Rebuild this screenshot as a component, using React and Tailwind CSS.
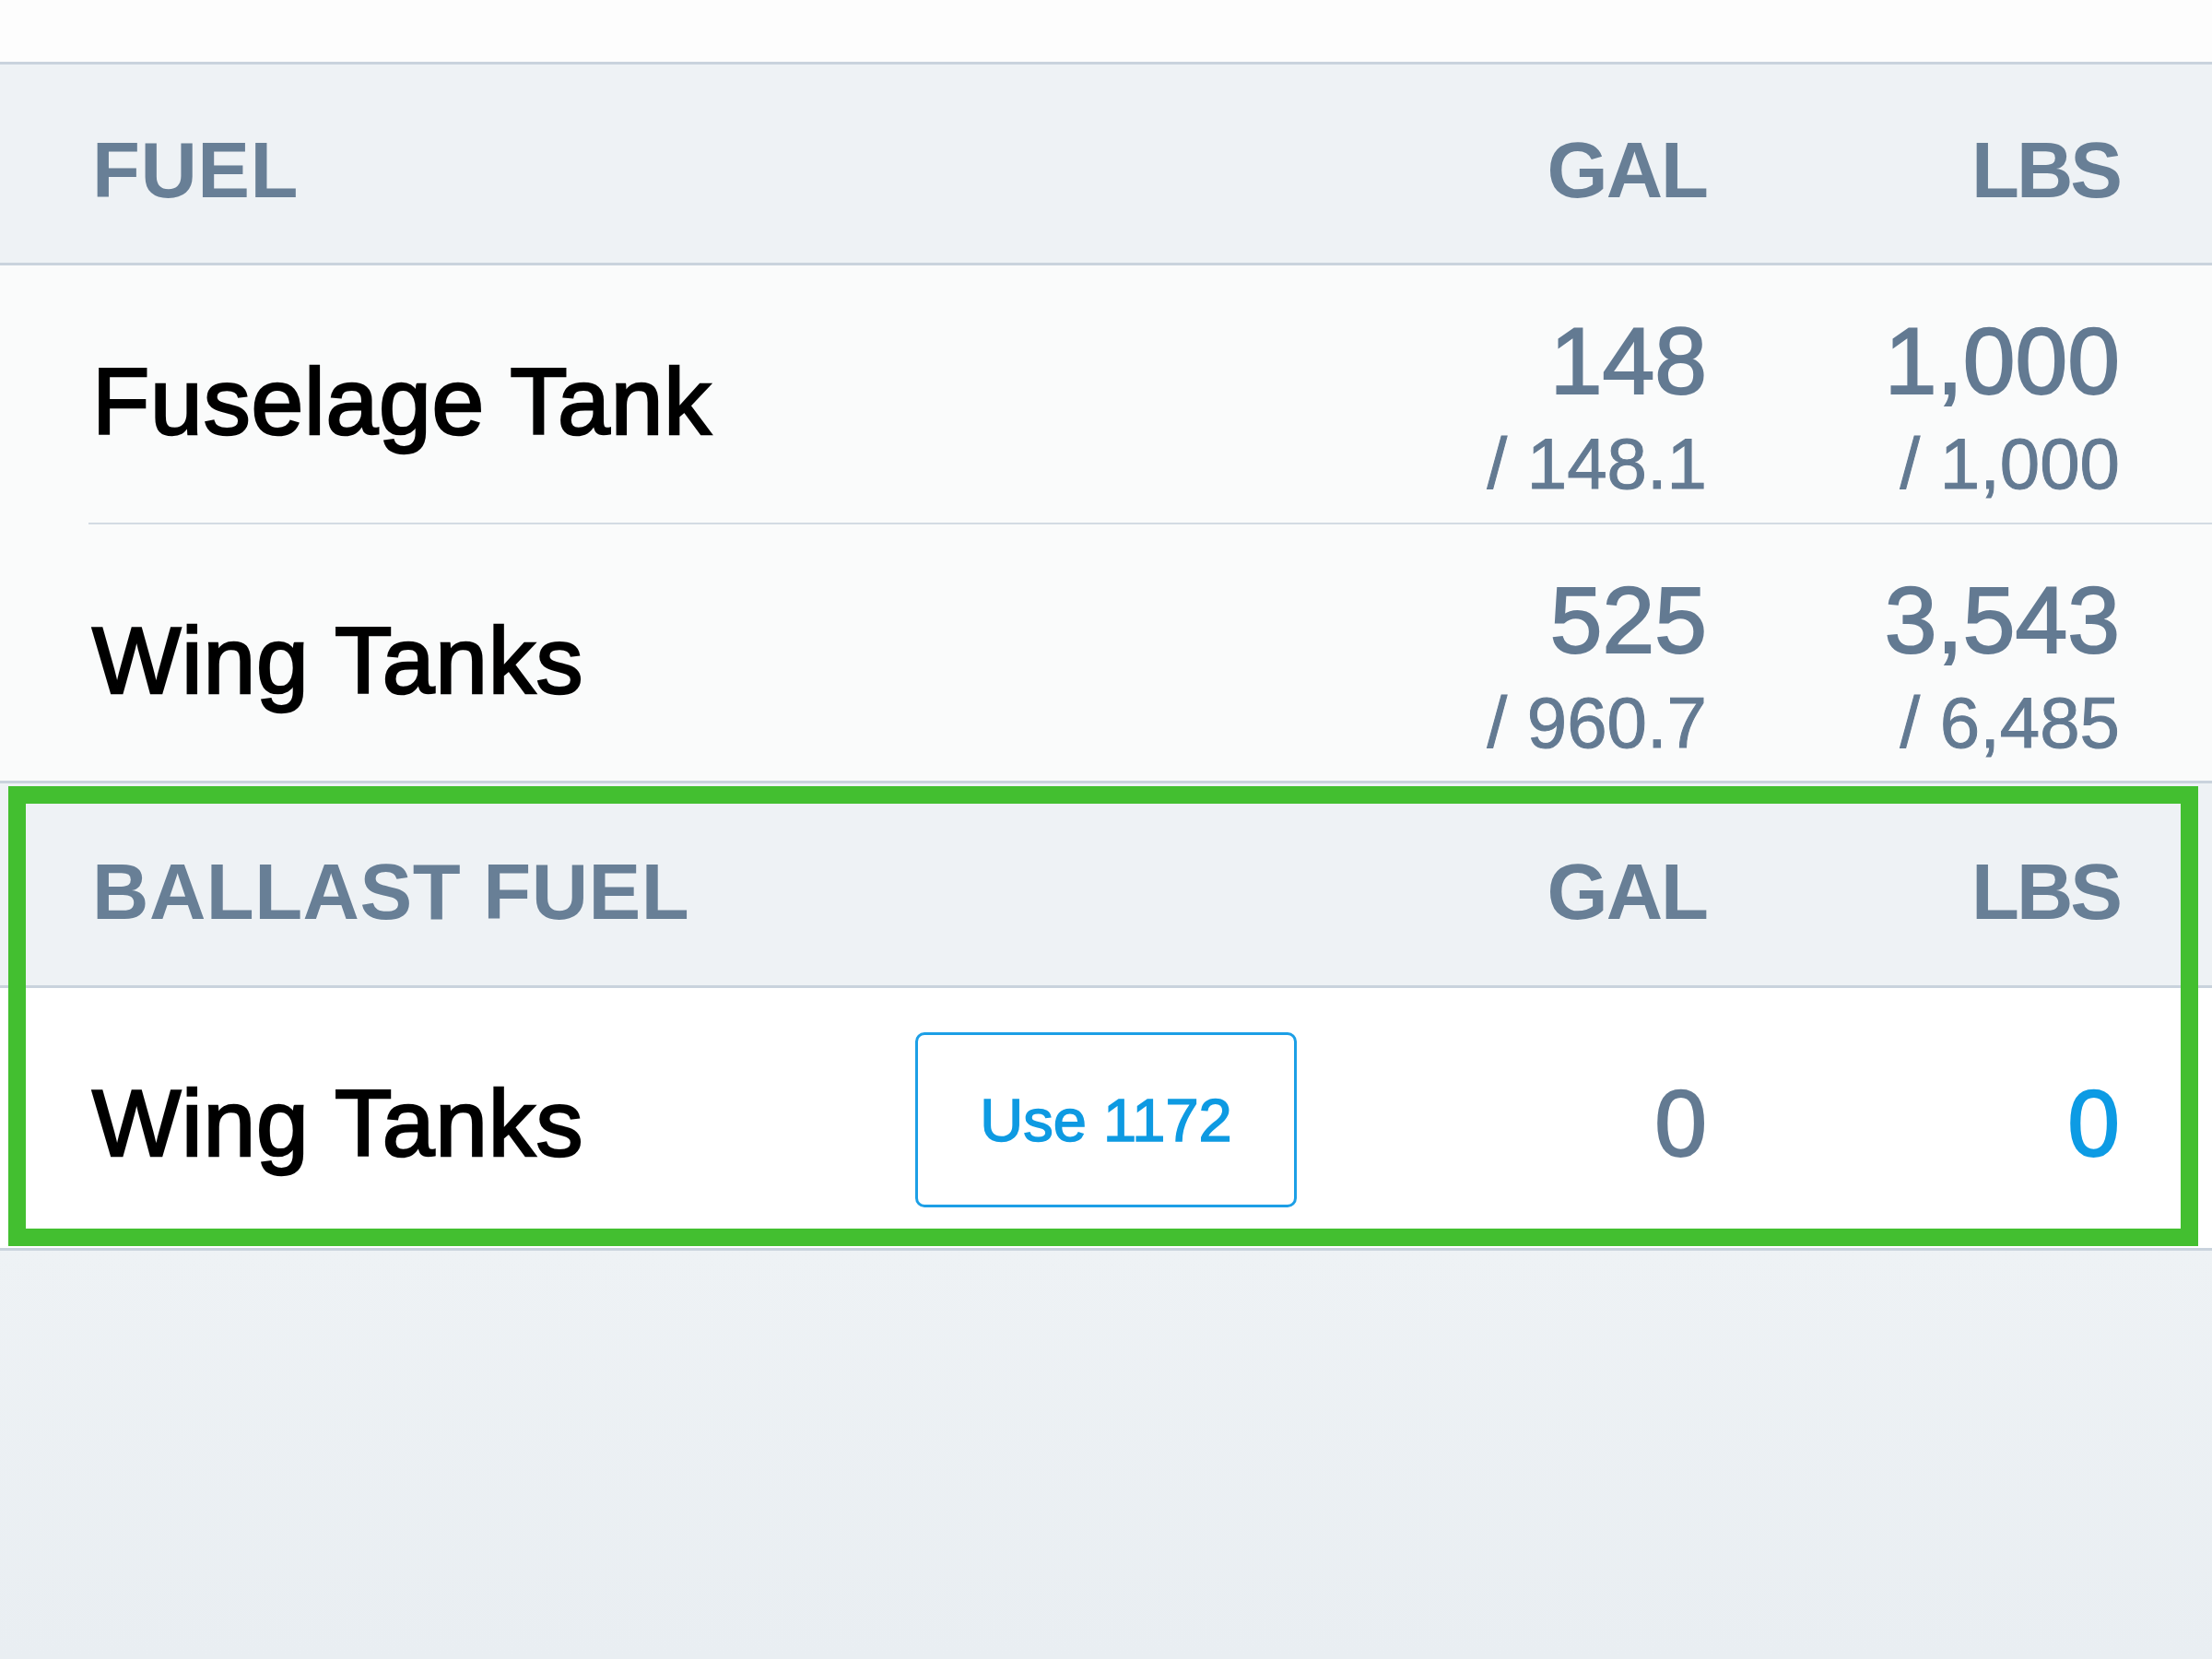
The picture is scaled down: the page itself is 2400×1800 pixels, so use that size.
const fuelRows = [
  { name: 'Fuselage Tank', gal: '148', galMax: '/ 148.1', lbs: '1,000', lbsMax: '/ 1,000' },
  { name: 'Wing Tanks', gal: '525', galMax: '/ 960.7', lbs: '3,543', lbsMax: '/ 6,485' },
];

function SectionHeader({ title, className }) {
  return (
    <div
      className={`flex items-start bg-[#eef2f5] border-b-[3px] border-[#c9d3dd] pl-[100px] pr-[100px] text-[85px] font-bold leading-none text-[#687f96] ${className}`}
    >
      <div className="flex-1 tracking-[0.5px]">{title}</div>
      <div className="w-[300px] text-right tracking-[-2px]">GAL</div>
      <div className="w-[448px] text-right tracking-[-3px]">LBS</div>
    </div>
  );
}

function Amount({ value, max, className }) {
  return (
    <div className={`flex flex-col items-end pt-[53px] text-[#637a92] ${className}`}>
      <div className="text-[102px] leading-none [-webkit-text-stroke:2px_currentcolor]">{value}</div>
      <div className="mt-[21px] text-[78px] leading-none [-webkit-text-stroke:1px_currentcolor]">{max}</div>
    </div>
  );
}

function FuelRow({ row, last }) {
  return (
    <div className={`h-[281px] bg-[#fafbfb] ${last ? 'border-b-[3px] border-[#c9d3dd]' : 'pl-[96px]'}`}>
      <div
        className={`flex h-full items-start pr-[100px] ${last ? 'pl-[100px]' : 'pl-[4px] border-b-2 border-[#d3dbe3]'}`}
      >
        <div className="flex-1 pt-[97px] text-[102px] leading-none tracking-[0.8px] text-black [-webkit-text-stroke:2.5px_currentcolor]">
          {row.name}
        </div>
        <Amount value={row.gal} max={row.galMax} className="w-[300px]" />
        <Amount value={row.lbs} max={row.lbsMax} className="w-[448px]" />
      </div>
    </div>
  );
}

export default function App() {
  return (
    <div className="relative flex h-[1800px] w-[2400px] flex-col overflow-hidden font-['Liberation_Sans',Arial,sans-serif]">
      <div className="h-[70px] bg-[#fdfdfd] border-b-[3px] border-[#c9d3dd]" />

      <SectionHeader title="FUEL" className="h-[218px] pt-[72px]" />
      {fuelRows.map((row, i) => (
        <FuelRow key={row.name} row={row} last={i === fuelRows.length - 1} />
      ))}

      <SectionHeader title="BALLAST FUEL" className="h-[222px] pt-[75px]" />

      {/* ballast row */}
      <div className="flex h-[285px] items-start bg-white border-b-[3px] border-[#c9d3dd] pl-[100px] pr-[100px]">
        <div className="flex-1 pt-[96px] text-[102px] leading-none tracking-[0.8px] text-black [-webkit-text-stroke:2.5px_currentcolor]">
          Wing Tanks
        </div>
        <button className="mt-[48px] mr-[145px] flex h-[190px] w-[414px] items-center justify-center rounded-[10px] border-[3px] border-[#1c9fe6] bg-white text-[65px] leading-none text-[#0e9ae2] [-webkit-text-stroke:1.5px_currentcolor]">
          Use 1172
        </button>
        <div className="w-[300px] pt-[96px] text-right text-[102px] leading-none text-[#637a92] [-webkit-text-stroke:2px_currentcolor]">
          0
        </div>
        <div className="w-[448px] pt-[96px] text-right text-[102px] leading-none text-[#0d9be4] [-webkit-text-stroke:2px_currentcolor]">
          0
        </div>
      </div>

      <div className="flex-1 bg-gradient-to-b from-[#eef2f5] to-[#e9eef2]" />

      {/* highlight frame */}
      <div className="pointer-events-none absolute left-[9px] top-[853px] h-[499px] w-[2376px] border-[19px] border-[#43bf30]" />
    </div>
  );
}
